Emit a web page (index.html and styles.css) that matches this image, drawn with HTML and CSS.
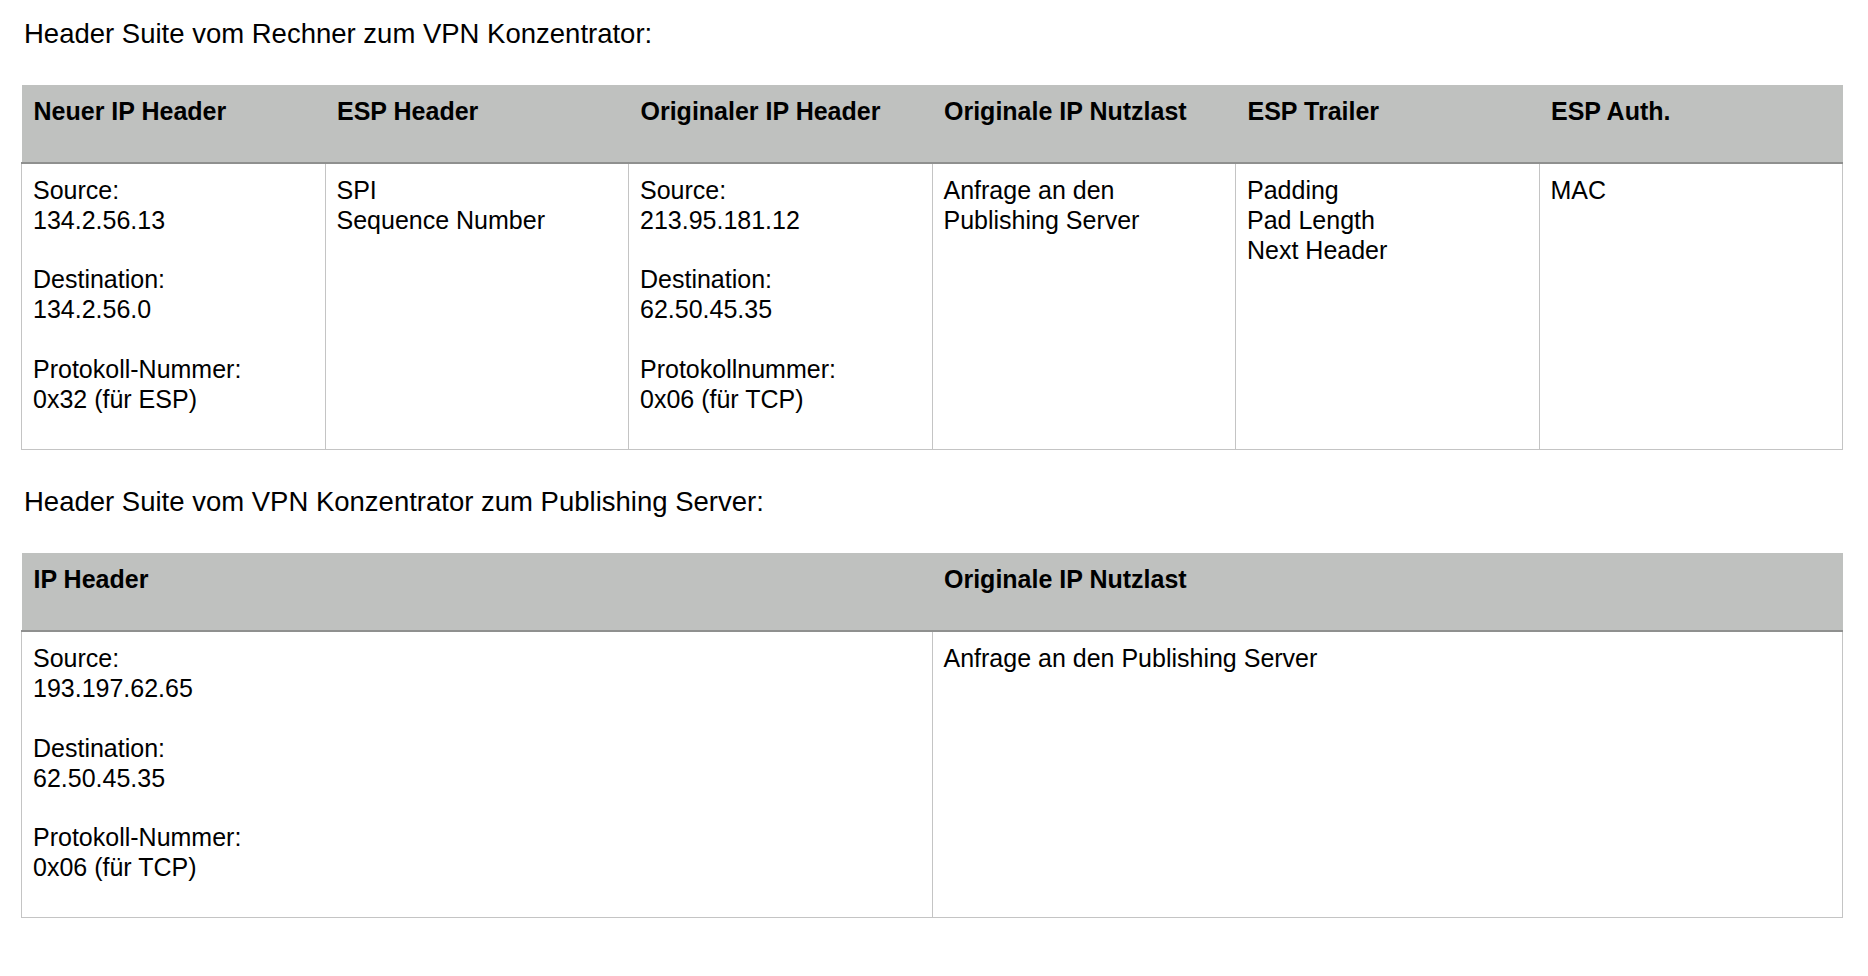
FILE: index.html
```html
<!DOCTYPE html>
<html lang="de">
<head>
<meta charset="utf-8">
<title>Header Suite</title>
<link rel="stylesheet" href="styles.css">
</head>
<body>
<main class="page">
  <h2 class="title">Header Suite vom Rechner zum VPN Konzentrator:</h2>
  <table class="suite">
    <thead>
      <tr>
        <th>Neuer IP Header</th>
        <th>ESP Header</th>
        <th>Originaler IP Header</th>
        <th>Originale IP Nutzlast</th>
        <th>ESP Trailer</th>
        <th>ESP Auth.</th>
      </tr>
    </thead>
    <tbody>
      <tr>
        <td>Source:<br>134.2.56.13<br><br>Destination:<br>134.2.56.0<br><br>Protokoll-Nummer:<br>0x32 (für ESP)</td>
        <td>SPI<br>Sequence Number</td>
        <td>Source:<br>213.95.181.12<br><br>Destination:<br>62.50.45.35<br><br>Protokollnummer:<br>0x06 (für TCP)</td>
        <td>Anfrage an den<br>Publishing Server</td>
        <td>Padding<br>Pad Length<br>Next Header</td>
        <td>MAC</td>
      </tr>
    </tbody>
  </table>

  <h2 class="title title-next">Header Suite vom VPN Konzentrator zum Publishing Server:</h2>
  <table class="suite">
    <thead>
      <tr>
        <th>IP Header</th>
        <th>Originale IP Nutzlast</th>
      </tr>
    </thead>
    <tbody>
      <tr>
        <td>Source:<br>193.197.62.65<br><br>Destination:<br>62.50.45.35<br><br>Protokoll-Nummer:<br>0x06 (für TCP)</td>
        <td>Anfrage an den Publishing Server</td>
      </tr>
    </tbody>
  </table>
</main>
</body>
</html>
```

FILE: styles.css
```css
html, body {
  margin: 0;
  padding: 0;
  background: #ffffff;
}

body {
  font-family: "Liberation Sans", Arial, Helvetica, sans-serif;
  color: #000000;
}

.page {
  display: flex;
  flex-direction: column;
  gap: 35px;
  padding: 18px 0 0 21px;
}

.title {
  margin: 0;
  padding-left: 3px;
  font-size: 27.5px;
  line-height: 32px;
  font-weight: normal;
}

.title-next {
  margin-top: 1.5px;
}

.suite {
  width: 1822px;
  table-layout: fixed;
  border-collapse: collapse;
  font-size: 25px;
}

.suite th {
  background: #bfc1bf;
  text-align: left;
  vertical-align: top;
  font-weight: bold;
  line-height: 30px;
  padding: 11px 11px 36px 12px;
  border-bottom: 2px solid #8f908f;
}

.suite td {
  vertical-align: top;
  line-height: 29.8px;
  padding: 12px 11px 34.5px 11px;
  border: 1px solid #c4c4c4;
  border-top: none;
}
```
